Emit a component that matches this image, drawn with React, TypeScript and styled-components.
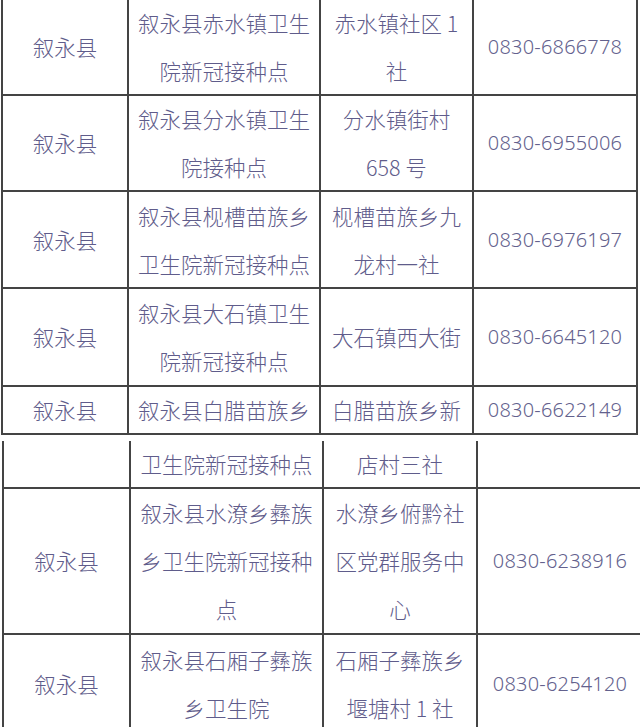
import React from "react";
import styled, { createGlobalStyle } from "styled-components";

const Global = createGlobalStyle`
  html, body { margin: 0; padding: 0; background: #ffffff; }
  body { width: 640px; height: 727px; overflow: hidden; }
`;

const Page = styled.div`
  width: 640px;
  height: 727px;
  overflow: hidden;
  background: #fff;
`;

const Grid = styled.div<{ $cols: string; $rows: string; $ml: number; $mt: number }>`
  display: grid;
  grid-template-columns: ${(p) => p.$cols};
  grid-template-rows: ${(p) => p.$rows};
  border-left: 2px solid #444;
  margin-left: ${(p) => p.$ml}px;
  margin-top: ${(p) => p.$mt}px;
  width: max-content;
`;

const Cell = styled.div<{ $mono?: boolean; $noRight?: boolean }>`
  box-sizing: border-box;
  border-right: ${(p) => (p.$noRight ? "none" : "2px solid #444")};
  border-bottom: 2px solid #444;
  display: flex;
  flex-direction: column;
  align-items: center;
  justify-content: center;
  text-align: center;
  color: ${(p) => (p.$mono ? "#63618d" : "#5f5c8b")};
  font-family: ${(p) =>
    p.$mono
      ? `"Noto Sans", "Liberation Sans", sans-serif`
      : `"Noto Sans CJK SC", "Noto Sans", sans-serif`};
  font-size: ${(p) => (p.$mono ? "20px" : "21.5px")};
  letter-spacing: ${(p) => (p.$mono ? "0.2px" : "0")};
  line-height: 48px;
  font-weight: 300;
  white-space: nowrap;
`;

const Line = styled.span`
  display: block;
`;

type Row = [string[], string[], string[], string];

const top: Row[] = [
  [["叙永县"], ["叙永县赤水镇卫生", "院新冠接种点"], ["赤水镇社区 1", "社"], "0830-6866778"],
  [["叙永县"], ["叙永县分水镇卫生", "院接种点"], ["分水镇街村", "658 号"], "0830-6955006"],
  [["叙永县"], ["叙永县枧槽苗族乡", "卫生院新冠接种点"], ["枧槽苗族乡九", "龙村一社"], "0830-6976197"],
  [["叙永县"], ["叙永县大石镇卫生", "院新冠接种点"], ["大石镇西大街"], "0830-6645120"],
  [["叙永县"], ["叙永县白腊苗族乡"], ["白腊苗族乡新"], "0830-6622149"],
];

const bottom: Row[] = [
  [[""], ["卫生院新冠接种点"], ["店村三社"], ""],
  [["叙永县"], ["叙永县水潦乡彝族", "乡卫生院新冠接种", "点"], ["水潦乡俯黔社", "区党群服务中", "心"], "0830-6238916"],
  [["叙永县"], ["叙永县石厢子彝族", "乡卫生院"], ["石厢子彝族乡", "堰塘村 1 社"], "0830-6254120"],
];

function Rows({ rows, noRight }: { rows: Row[]; noRight?: boolean }) {
  return (
    <>
      {rows.map((r, i) => (
        <React.Fragment key={i}>
          {r.slice(0, 3).map((lines, j) => (
            <Cell key={j}>
              {(lines as string[]).map((l, k) => (
                <Line key={k}>{l}</Line>
              ))}
            </Cell>
          ))}
          <Cell $mono $noRight={noRight}>
            {r[3]}
          </Cell>
        </React.Fragment>
      ))}
    </>
  );
}

export default function App() {
  return (
    <Page>
      <Global />
      <Grid $cols="126px 192px 153px 164px" $rows="97px 96px 97px 98px 48px" $ml={1} $mt={-1}>
        <Rows rows={top} />
      </Grid>
      <Grid $cols="127px 193px 154px 164px" $rows="48px 146px 100px" $ml={2} $mt={6}>
        <Rows rows={bottom} noRight />
      </Grid>
    </Page>
  );
}
